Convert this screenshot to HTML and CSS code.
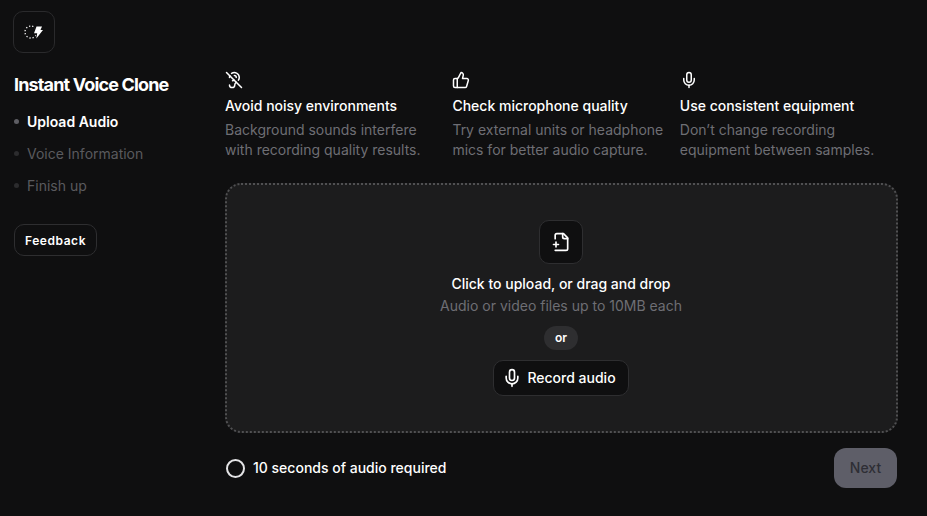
FILE: index.html
```html
<!DOCTYPE html>
<html lang="en">
<head>
    <meta charset="UTF-8">
    <meta name="viewport" content="width=device-width, initial-scale=1.0">
    <title>Instant Voice Clone</title>
    <link rel="stylesheet" href="styles.css">
</head>
<body>
    <div class="page">
        <aside class="sidebar">
            <div class="logo">
                <svg width="20" height="20" viewBox="0 0 20 20" fill="none">
                    <circle cx="7" cy="10" r="6" stroke="#fff" stroke-width="1.300" stroke-dasharray="1.200 2"/>
                    <path d="M11.500 3.500 H19.500 L18 7 H20.500 L11 18 L12 12.300 H8.800 Z" fill="#0f0f10"/>
                    <path d="M12.500 4.500 H18 L16.500 8 H19 L12.300 16.500 L13.200 11.300 H10 Z" fill="#fff"/>
                </svg>
            </div>
            <h1 class="title">Instant Voice Clone</h1>
            <ul class="steps">
                <li class="step active">Upload Audio</li>
                <li class="step">Voice Information</li>
                <li class="step">Finish up</li>
            </ul>
            <button class="feedback">Feedback</button>
        </aside>

        <main class="content">
            <div class="tips">
                <div class="tip">
                    <svg class="tip-icon" width="18" height="18" viewBox="0 0 24 24" fill="none" stroke="#fff" stroke-width="2" stroke-linecap="round" stroke-linejoin="round">
                        <path d="M6 18.500a3.500 3.500 0 1 0 7 0c0-1.570.92-2.520 2.040-3.460"/>
                        <path d="M6 8.500c0-.75.13-1.470.36-2.140"/>
                        <path d="M8.800 3.150A6.500 6.500 0 0 1 19 8.500c0 1.630-.44 2.810-1.090 3.760"/>
                        <path d="M12.500 6A2.500 2.500 0 0 1 15 8.500M10 13a2 2 0 0 0 1.820-1.180"/>
                        <path d="m2 2 20 20"/>
                    </svg>
                    <h3>Avoid noisy environments</h3>
                    <p>Background sounds interfere with recording quality results.</p>
                </div>
                <div class="tip">
                    <svg class="tip-icon" width="18" height="18" viewBox="0 0 24 24" fill="none" stroke="#fff" stroke-width="2" stroke-linecap="round" stroke-linejoin="round">
                        <path d="M7 10v12"/>
                        <path d="M15 5.880 14 10h5.830a2 2 0 0 1 1.920 2.560l-2.330 8A2 2 0 0 1 17.500 22H4a2 2 0 0 1-2-2v-8a2 2 0 0 1 2-2h2.760a2 2 0 0 0 1.790-1.110L12 2a3.130 3.130 0 0 1 3 3.880Z"/>
                    </svg>
                    <h3>Check microphone quality</h3>
                    <p>Try external units or headphone mics for better audio capture.</p>
                </div>
                <div class="tip">
                    <svg class="tip-icon" width="18" height="18" viewBox="0 0 24 24" fill="none" stroke="#fff" stroke-width="2" stroke-linecap="round" stroke-linejoin="round">
                        <path d="M12 2a3 3 0 0 0-3 3v7a3 3 0 0 0 6 0V5a3 3 0 0 0-3-3Z"/>
                        <path d="M19 10v2a7 7 0 0 1-14 0v-2"/>
                        <path d="M12 19v3"/>
                    </svg>
                    <h3>Use consistent equipment</h3>
                    <p>Don’t change recording equipment between samples.</p>
                </div>
            </div>

            <div class="dropzone">
                <div class="file-icon">
                    <svg width="20" height="20" viewBox="0 0 24 24" fill="none" stroke="#fff" stroke-width="2" stroke-linecap="round" stroke-linejoin="round">
                        <path d="M5 8V4a2 2 0 0 1 2-2h8l5 5v13a2 2 0 0 1-2 2H5"/>
                        <path d="M14 2v4a2 2 0 0 0 2 2h4"/>
                        <path d="M3 15h6"/>
                        <path d="M6 12v6"/>
                    </svg>
                </div>
                <div class="drop-title">Click to upload, or drag and drop</div>
                <div class="drop-sub">Audio or video files up to 10MB each</div>
                <span class="or">or</span>
                <button class="record">
                    <svg width="20" height="20" viewBox="0 0 24 24" fill="none" stroke="#fff" stroke-width="2" stroke-linecap="round" stroke-linejoin="round">
                        <path d="M12 2a3 3 0 0 0-3 3v7a3 3 0 0 0 6 0V5a3 3 0 0 0-3-3Z"/>
                        <path d="M19 10v2a7 7 0 0 1-14 0v-2"/>
                        <path d="M12 19v3"/>
                    </svg>
                    <span>Record audio</span>
                </button>
            </div>

            <div class="footer">
                <div class="required">
                    <span class="ring"></span>
                    <span class="required-text">10 seconds of audio required</span>
                </div>
                <button class="next" disabled>Next</button>
            </div>
        </main>
    </div>
</body>
</html>
```

FILE: styles.css
```css
body {
    font-family: Inter, "Noto Sans", sans-serif;
    background: #0f0f10;
    color: white;
    margin: 0;
    height: 516px;
    overflow: hidden;
}
button { font-family: inherit; cursor: pointer; }
.page { display: flex; }

.sidebar { width: 225px; flex: none; padding: 11px 0 0 14px; box-sizing: border-box; }
.logo {
    width: 42px;
    height: 42px;
    margin-left: -1px;
    box-sizing: border-box;
    border: 1px solid #2a2a2c;
    border-radius: 10px;
    display: flex;
    align-items: center;
    justify-content: center;
}
.title { font-size: 18px; line-height: 24px; font-weight: 700; letter-spacing: -0.85px; margin: 20px 0 0; }
.steps { list-style: none; margin: 8px 0 0; padding: 0; }
.step {
    display: flex;
    align-items: center;
    height: 32px;
    font-size: 14px;
    color: #5a5a5e;
}
.step::before {
    content: "";
    width: 5px;
    height: 5px;
    border-radius: 50%;
    background: #2c2c2e;
    margin-right: 8px;
}
.step.active { color: #fff; font-weight: 600; }
.step.active::before { background: #5e5e64; }
.feedback {
    display: block;
    margin-top: 23px;
    width: 83px;
    height: 32px;
    background: #0f0f10;
    border: 1px solid #2e2e30;
    border-radius: 10px;
    color: #fff;
    font-size: 12px;
    font-weight: 600;
    letter-spacing: 0.55px;
    padding: 0;
}

.content { width: 673px; padding-top: 71px; }
.tips { display: grid; grid-template-columns: repeat(3, 227.4px); }
.tip-icon { display: block; margin-bottom: 7px; }
.tip h3 { font-size: 14px; line-height: 20px; font-weight: 500; margin: 0; }
.tip p { font-size: 14px; line-height: 20px; color: #6e6e74; margin: 4px 0 0; padding-right: 10px; }

.dropzone {
    margin-top: 23px;
    height: 250px;
    box-sizing: border-box;
    background: #1c1c1d;
    border: 2px dotted #505052;
    border-radius: 16px;
    display: flex;
    flex-direction: column;
    align-items: center;
    padding: 35px 1px 0 0;
}
.file-icon {
    width: 44px;
    height: 44px;
    box-sizing: border-box;
    background: #0f0f10;
    border: 1px solid #2e2e30;
    border-radius: 10px;
    display: flex;
    align-items: center;
    justify-content: center;
}
.drop-title { font-size: 14px; line-height: 20px; font-weight: 500; margin-top: 10px; }
.drop-sub { font-size: 14px; line-height: 20px; color: #6e6e74; margin-top: 2px; }
.or {
    margin-top: 10px;
    width: 34px;
    height: 24px;
    border-radius: 12px;
    background: #2e2e30;
    font-size: 12px;
    font-weight: 600;
    line-height: 24px;
    text-align: center;
}
.record {
    margin-top: 10px;
    width: 136px;
    height: 36px;
    background: #0f0f10;
    border: 1px solid #2e2e30;
    border-radius: 10px;
    color: #fff;
    font-size: 14px;
    font-weight: 500;
    display: flex;
    align-items: center;
    justify-content: center;
    gap: 5px;
    padding: 0 4px 0 0;
}
.record span { margin-bottom: 1px; }

.footer { display: flex; align-items: center; justify-content: space-between; margin-top: 15px; }
.required { display: flex; align-items: center; gap: 8px; font-size: 14px; font-weight: 500; padding-left: 1px; }
.required-text { margin-bottom: 1px; }
.ring { width: 19px; height: 19px; box-sizing: border-box; border: 2px solid #e4e4e6; border-radius: 50%; }
.next {
    width: 63px;
    height: 40px;
    background: #5e5e68;
    color: #2e2e35;
    border: none;
    border-radius: 12px;
    font-size: 14px;
    font-weight: 500;
    margin-right: 1px;
    padding: 0 0 1px;
}
```
